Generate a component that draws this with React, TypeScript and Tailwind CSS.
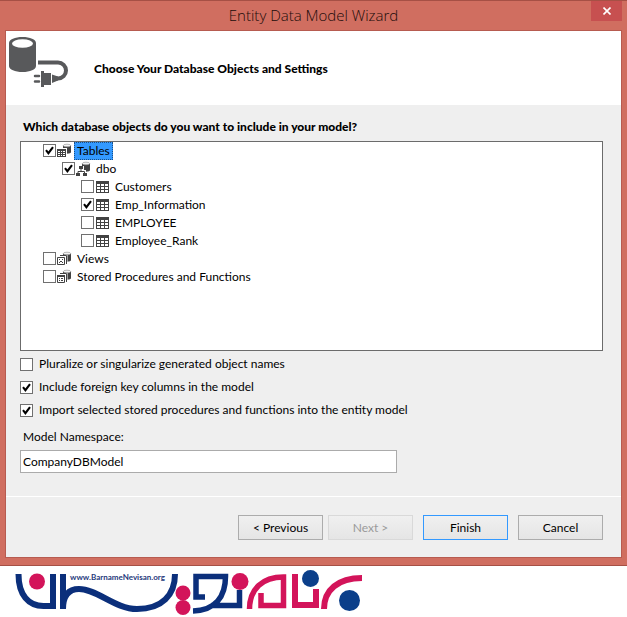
import { useState, type ReactNode } from "react";

type IconKind = "tables" | "schema" | "table" | "views" | "procedures";

type TreeItem = {
    id: string;
    label: string;
    icon: IconKind;
    level: number;
    checked: boolean;
};

const treeItems: TreeItem[] = [
    { id: "tables", label: "Tables", icon: "tables", level: 0, checked: true },
    { id: "dbo", label: "dbo", icon: "schema", level: 1, checked: true },
    { id: "customers", label: "Customers", icon: "table", level: 2, checked: false },
    { id: "emp-information", label: "Emp_Information", icon: "table", level: 2, checked: true },
    { id: "employee", label: "EMPLOYEE", icon: "table", level: 2, checked: false },
    { id: "employee-rank", label: "Employee_Rank", icon: "table", level: 2, checked: false },
    { id: "views", label: "Views", icon: "views", level: 0, checked: false },
    { id: "procedures", label: "Stored Procedures and Functions", icon: "procedures", level: 0, checked: false },
];

const options = [
    { id: "pluralize", label: "Pluralize or singularize generated object names", checked: false },
    { id: "foreign-keys", label: "Include foreign key columns in the model", checked: true },
    { id: "import", label: "Import selected stored procedures and functions into the entity model", checked: true },
];

const indents = ["pl-[22px]", "pl-[41px]", "pl-[60px]"];

function Checkbox({ id, defaultChecked }: { id: string; defaultChecked: boolean }) {
    return (
        <span className="relative block size-[13px] shrink-0">
            <input
                id={id}
                type="checkbox"
                defaultChecked={defaultChecked}
                className="peer block size-[13px] appearance-none border border-[#707070] bg-white"
            />
            <svg
                viewBox="0 0 13 13"
                className="pointer-events-none absolute inset-0 hidden size-[13px] peer-checked:block"
            >
                <path d="M3 6.2 5.4 9.2 10 3.2" fill="none" stroke="#000" strokeWidth="2.1" />
            </svg>
        </span>
    );
}

/* Small cylinder behind the tables / schema / views icons */
function MiniCylinder() {
    return (
        <>
            <path d="M6 2.5v7c2 1.6 6 1.6 8 0v-7z" fill="#424242" />
            <ellipse cx="10" cy="2.5" rx="3.7" ry="1.3" fill="#f4f4f4" stroke="#8a8a8a" strokeWidth=".6" />
        </>
    );
}

function TreeIcon({ kind }: { kind: IconKind }) {
    let art: ReactNode;
    if (kind === "table") {
        art = (
            <>
                <path d="M1 2h13v12H1z" fill="#424242" />
                <path
                    d="M2 5h3v2H2zM6 5h3v2H6zM10 5h3v2h-3zM2 8h3v2H2zM6 8h3v2H6zM10 8h3v2h-3zM2 11h3v2H2zM6 11h3v2H6zM10 11h3v2h-3z"
                    fill="#fff"
                />
            </>
        );
    } else if (kind === "schema") {
        art = (
            <>
                <MiniCylinder />
                <path d="M2 5h6v4h2v6H0V9h2z" fill="#fff" />
                <path d="M5 8v2.5M2 12v-1.5h6.5V12" fill="none" stroke="#424242" />
                <path d="M3 5h4v3H3zM0 12h4v3H0zM7 12h4v3H7z" fill="#424242" />
            </>
        );
    } else if (kind === "tables") {
        art = (
            <>
                <MiniCylinder />
                <path d="M0 5h10v10H0z" fill="#fff" />
                <path d="M0 6h9v8H0z" fill="#424242" />
                <path
                    d="M1 8h2v1H1zM4 8h1v1H4zM6 8h2v1H6zM1 10h2v1H1zM4 10h1v1H4zM6 10h2v1H6zM1 12h2v1H1zM4 12h1v1H4zM6 12h2v1H6z"
                    fill="#fff"
                />
            </>
        );
    } else {
        art = (
            <>
                <MiniCylinder />
                <path d="M1 4h9.5v11H1z" fill="#fff" />
                <path d="M3 4.5h6.5V13" fill="none" stroke="#424242" />
                <path d="M.5 6.5h7v7h-7z" fill="#fff" stroke="#424242" />
                {kind === "views" ? (
                    <path d="M2 8h1v1H2zM5 8h1v1H5zM3 10h2v1H3zM2 11h1v1H2zM5 11h1v1H5z" fill="#424242" />
                ) : (
                    <path d="M0 6h8v2H0zM2 9h1v1H2zM4 9h2v1H4zM2 11h1v1H2zM4 11h2v1H4z" fill="#424242" />
                )}
            </>
        );
    }
    return (
        <svg viewBox="0 0 15 15" className="ml-px size-[15px] shrink-0">
            {art}
        </svg>
    );
}

function DatabasePlugIcon() {
    return (
        <svg viewBox="0 0 60 52" className="h-[52px] w-[60px] shrink-0">
            <path d="M0 6C0 2.5 6 0 13.5 0S27 2.5 27 6v23c0 3.5-6 6-13.5 6S0 32.5 0 29z" fill="#58595b" />
            <ellipse cx="13.5" cy="6.5" rx="10.5" ry="4.3" fill="#fff" />
            <path d="M29 25.5h20a8 8 0 0 1 0 16h-3" fill="none" stroke="#58595b" strokeWidth="4" />
            <path d="M43 37.5V46l6-2.5v-4zM35 36h7v12h-7zM32 34h3v16h-3z" fill="#58595b" />
            <path d="M26 39h4M26 44.5h4" stroke="#58595b" strokeWidth="2.5" strokeLinecap="round" />
        </svg>
    );
}

function SiteLogo() {
    return (
        <svg viewBox="0 0 370 50" className="h-[50px] w-[370px] max-w-full" role="img" aria-label="BarnameNevisan">
            <g fill="none" stroke="#0b2f7b" strokeWidth="6">
                <path d="M18.5 8c0 21 10 32 25 32H53V8" />
                <path d="M63 8v35c0-14 6-20 16-20 18 0 36 20 58 20 25 0 38-14 38-35" />
                <path d="M205 31h-9V10.5h29.5c0 20-10 34-32.5 34.5M211 39.5h28.5V24" strokeWidth="5.5" />
            </g>
            <g fill="none" stroke="#d3145a" strokeWidth="6">
                <path d="M249.5 43c0-20 13-32 34-32v28.5H261V27" strokeWidth="5.5" />
                <path d="M295 8v31h21V23" />
                <path d="M324 43c0-19 14-31 38-31" />
            </g>
            <g fill="#d3145a">
                <circle cx="37" cy="15.5" r="8" />
                <circle cx="183" cy="27" r="7.5" />
                <circle cx="183" cy="41.5" r="7.5" />
                <circle cx="240" cy="15.5" r="8.5" />
            </g>
            <circle cx="310.5" cy="12.5" r="8.5" fill="#0b3f8a" />
            <circle cx="349.5" cy="34.5" r="10.5" fill="#0b3f8a" />
            <text x="70" y="14" fontSize="8" fontWeight="700" fill="#26397c" fontFamily="Lato, sans-serif">
                www.BarnameNevisan.org
            </text>
        </svg>
    );
}

const buttonClass =
    "h-[25px] w-[85px] border bg-linear-to-b from-[#f0f0f0] to-[#e5e5e5] text-center leading-4";

export default function App() {
    const [selected, setSelected] = useState("tables");

    return (
        <div className="min-h-screen bg-white font-['Lato','Noto_Sans',sans-serif] text-xs text-black">
            <div className="border-y border-[#a65045] bg-[#d06e60] px-[5px] pb-[7px]">
                {/* Title bar */}
                <header className="grid h-[29px] grid-cols-[1fr_auto_1fr] items-start">
                    <h1 className="col-start-2 pt-1 font-['Open_Sans',sans-serif] text-[15px] leading-5 font-light text-[#200c0a]">
                        Entity Data Model Wizard
                    </h1>
                    <button
                        aria-label="Close"
                        className="flex h-5 w-[31px] items-center justify-center justify-self-end bg-[#c75050]"
                    >
                        <svg viewBox="0 0 8 8" className="size-2">
                            <path d="M.5.5l7 7M7.5.5l-7 7" stroke="#fff" strokeWidth="1.6" />
                        </svg>
                    </button>
                </header>

                <main className="border border-[#b75b50] bg-[#efefef]">
                    <div className="flex h-[74px] items-start bg-white pt-1.5 pl-[3px]">
                        <DatabasePlugIcon />
                        <h2 className="pt-6 pl-[25px] leading-4 font-black">
                            Choose Your Database Objects and Settings
                        </h2>
                    </div>

                    <div className="pt-[14px] pr-[18px] pb-[23px] pl-[14px]">
                        <h3 className="pl-[3px] leading-4 font-black">
                            Which database objects do you want to include in your model?
                        </h3>

                        {/* Database objects */}
                        <ul className="mt-1.5 min-h-[210px] border border-[#6b6b6b] bg-white">
                            {treeItems.map((item) => (
                                <li key={item.id} className={`flex h-[18px] items-center pb-px ${indents[item.level]}`}>
                                    <Checkbox id={item.id} defaultChecked={item.checked} />
                                    <TreeIcon kind={item.icon} />
                                    <label
                                        htmlFor={item.id}
                                        onMouseDown={() => setSelected(item.id)}
                                        className={`ml-0.5 h-[18px] self-start border px-0.5 leading-[15px] ${
                                            selected === item.id
                                                ? "border-dotted border-[#1b4f86] bg-[#3399ff]"
                                                : "border-transparent"
                                        }`}
                                    >
                                        {item.label}
                                    </label>
                                </li>
                            ))}
                        </ul>

                        {/* Generation options */}
                        <div className="mt-[5px] space-y-[7px]">
                            {options.map((option) => (
                                <div key={option.id} className="flex items-center gap-1.5 leading-4">
                                    <Checkbox id={option.id} defaultChecked={option.checked} />
                                    <label htmlFor={option.id}>{option.label}</label>
                                </div>
                            ))}
                        </div>

                        <label htmlFor="namespace" className="mt-[11px] block pl-[3px] leading-4">
                            Model Namespace:
                        </label>
                        <input
                            id="namespace"
                            type="text"
                            defaultValue="CompanyDBModel"
                            className="mt-[5px] block h-[23px] w-[377px] max-w-full border border-[#ababab] bg-white px-0.5 leading-4"
                        />
                    </div>

                    {/* Wizard buttons */}
                    <footer className="flex justify-end border-t border-white pt-[18px] pr-[18px] pb-[17px]">
                        <button className={`border-[#acacac] ${buttonClass}`}>&lt; Previous</button>
                        <button disabled className={`ml-[5px] border-[#d9d9d9] text-[#9a9a9a] ${buttonClass}`}>
                            Next &gt;
                        </button>
                        <button className={`ml-2.5 border-[#3399ff] ${buttonClass}`}>Finish</button>
                        <button className={`ml-2.5 border-[#acacac] ${buttonClass}`}>Cancel</button>
                    </footer>
                </main>
            </div>

            <SiteLogo />
        </div>
    );
}
